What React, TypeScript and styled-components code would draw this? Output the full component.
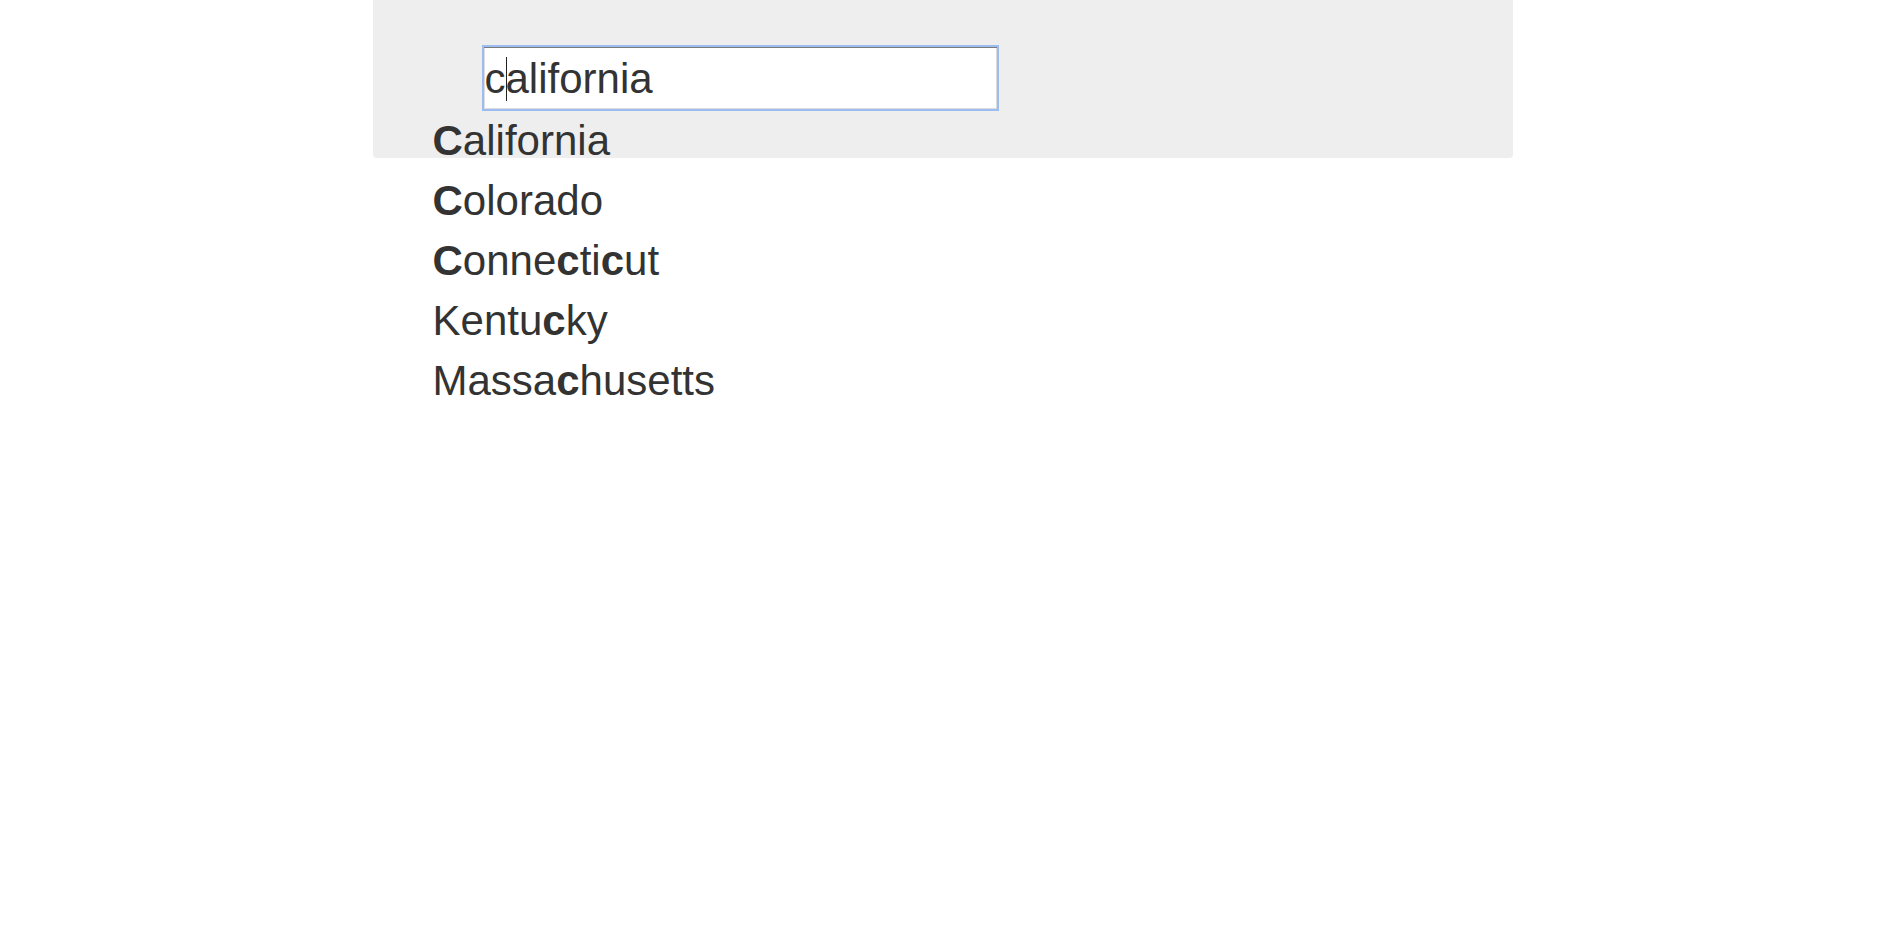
import styled, { createGlobalStyle } from "styled-components";

const GlobalStyle = createGlobalStyle`
  html, body {
    margin: 0;
    padding: 0;
    background: #fff;
  }
  body {
    font-family: "Liberation Sans", Arial, sans-serif;
    color: #333;
    min-height: 930px;
  }
`;

const states = ["California", "Colorado", "Connecticut", "Kentucky", "Massachusetts"];
const query = "c";

function highlight(name: string) {
  return name.split("").map((ch, i) =>
    ch.toLowerCase() === query ? <Match key={i}>{ch}</Match> : <span key={i}>{ch}</span>
  );
}

export default function App() {
  return (
    <>
      <GlobalStyle />
      <Page>
        <Panel>
          <SearchBox role="textbox">
            c<Caret />alifornia
          </SearchBox>
          <Suggestions>
            {states.map((s) => (
              <Item key={s}>{highlight(s)}</Item>
            ))}
          </Suggestions>
        </Panel>
      </Page>
    </>
  );
}

const Page = styled.div`
  width: 1140px;
  margin-left: calc(50% - 573px);
`;

const Panel = styled.div`
  background: #eee;
  height: 158px;
  border-radius: 0 0 4px 4px;
  padding-top: 45px;
  box-sizing: border-box;
  display: flex;
  flex-direction: column;
  align-items: flex-start;
`;

const SearchBox = styled.div`
  margin-left: 109px;
  width: 517px;
  height: 66px;
  flex-shrink: 0;
  box-sizing: border-box;
  background: #fff;
  border: 2px solid #9cbcf2;
  box-shadow: inset 0 1px 0 #7b7b7b, inset 1px 0 0 #dcdcdc, inset -1px 0 0 #dcdcdc,
    inset 0 -1px 0 #dcdcdc;
  padding: 0 1px;
  font-size: 42px;
  line-height: 64px;
  color: #333;
  white-space: nowrap;
  overflow: hidden;
`;

const Caret = styled.span`
  display: inline-block;
  width: 1px;
  height: 44px;
  background: #222;
  vertical-align: -8px;
  margin-right: -1px;
`;

const Suggestions = styled.ul`
  margin: 0 0 0 60px;
  padding: 0;
  list-style: none;
  flex-shrink: 0;
`;

const Item = styled.li`
  font-size: 42px;
  line-height: 60px;
  height: 60px;
  color: #333;
  white-space: nowrap;
`;

const Match = styled.b`
  font-weight: 700;
`;
